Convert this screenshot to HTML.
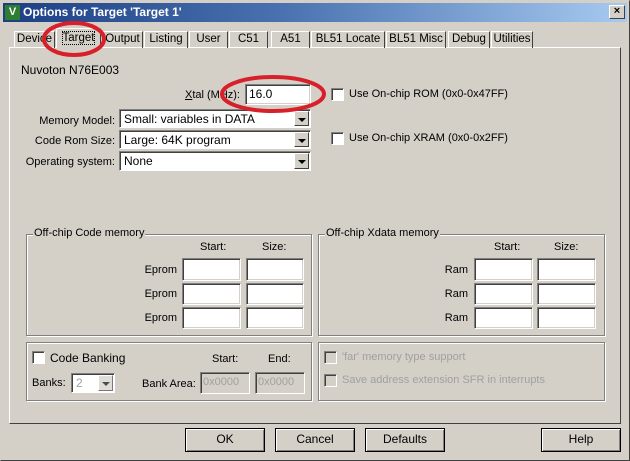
<!DOCTYPE html>
<html><head><style>
*{box-sizing:border-box;margin:0;padding:0}
body{width:630px;height:461px;background:#d4d0c8;font-family:"Liberation Sans",sans-serif;font-size:11px;color:#000;position:relative;overflow:hidden}
.a{position:absolute;white-space:nowrap}
.r{position:absolute;white-space:nowrap;text-align:right}
.win{position:absolute;left:0;top:0;width:630px;height:461px;border:1px solid #404040;border-top-color:#d4d0c8;border-left-color:#d4d0c8}
.tb{position:absolute;left:3px;top:3px;width:624px;height:19px;background:linear-gradient(90deg,#1c3f84,#4a72b0 45%,#a6caf0)}
.in{position:absolute;background:#fff;border:1px solid;border-color:#808080 #fff #fff #808080;box-shadow:inset 1px 1px 0 #404040,inset -1px -1px 0 #d4d0c8}
.dis{background:#d4d0c8;color:#a0a0a0}
.sel{position:absolute;background:#fff;border:1px solid;border-color:#808080 #fff #fff #808080;box-shadow:inset 1px 1px 0 #404040;padding:2px 0 0 4px;font-size:12px}
.dd{position:absolute;right:1px;top:1px;bottom:1px;width:15px;background:#d4d0c8;border:1px solid;border-color:#fff #404040 #404040 #fff}
.dd:after{content:"";position:absolute;left:3px;top:6px;border:4px solid transparent;border-top:4px solid #000;border-bottom:0}
.cb{position:absolute;width:13px;height:13px;background:#fff;border:1px solid;border-color:#808080 #fff #fff #808080;box-shadow:inset 1px 1px 0 #404040}
.grp{position:absolute;border:1px solid #808080;box-shadow:1px 1px 0 #fff,inset 1px 1px 0 #fff}
.gt{position:absolute;top:-8px;left:6px;background:#d4d0c8;padding:0 1px}
.btn{position:absolute;height:24px;border:1px solid #000;background:#d4d0c8;box-shadow:inset 1px 1px 0 #fff,inset -1px -1px 0 #808080;text-align:center;line-height:21px;font-size:12px}
.tab{position:absolute;top:31px;height:17px;border:1px solid;border-color:#fff #404040 transparent #fff;border-bottom:0;text-align:center;line-height:14px;font-size:11.5px}
</style></head><body>
<div class="win"></div>
<div class="tb"></div>
<div class="a" style="left:5px;top:5px;width:15px;height:15px;background:#2e7d32;color:#fff;font-weight:bold;font-size:11px;text-align:center;line-height:15px">V</div>
<div class="a" style="left:23px;top:5px;color:#fff;font-weight:bold;font-size:12px">Options for Target 'Target 1'</div>
<div class="a" style="left:609px;top:5px;width:16px;height:14px;background:#d4d0c8;border:1px solid;border-color:#fff #404040 #404040 #fff;text-align:center;line-height:11px;font-weight:bold;font-size:11px">×</div>

<div class="a" style="left:9px;top:47px;width:612px;height:377px;border:1px solid;border-color:#fff #404040 #404040 #fff"></div>
<div class="tab" style="left:14px;width:41px">Device</div>
<div class="tab" style="left:56px;width:45px;top:28px;height:20px;background:#d4d0c8;z-index:2;padding-top:2px"><span style="outline:1px dotted #000">Target</span></div>
<div class="tab" style="left:102px;width:41px">Output</div>
<div class="tab" style="left:144px;width:44px">Listing</div>
<div class="tab" style="left:189px;width:39px">User</div>
<div class="tab" style="left:229px;width:39px">C51</div>
<div class="tab" style="left:271px;width:39px">A51</div>
<div class="tab" style="left:311px;width:74px">BL51 Locate</div>
<div class="tab" style="left:386px;width:60px">BL51 Misc</div>
<div class="tab" style="left:448px;width:42px">Debug</div>
<div class="tab" style="left:491px;width:42px">Utilities</div>

<div class="a" style="left:21px;top:63px;font-size:12px">Nuvoton N76E003</div>
<div class="r" style="right:390px;top:89px"><u>X</u>tal (MHz):</div>
<div class="in" style="left:245px;top:84px;width:66px;height:21px;padding:2px 3px;font-size:12px">16.0</div>
<div class="cb" style="left:331px;top:88px"></div>
<div class="a" style="left:349px;top:88px">Use On-chip ROM (0x0-0x47FF)</div>
<div class="cb" style="left:331px;top:132px"></div>
<div class="a" style="left:349px;top:132px">Use On-chip XRAM (0x0-0x2FF)</div>

<div class="r" style="right:515px;top:115px">Memory Model:</div>
<div class="sel" style="left:119px;top:109px;width:192px;height:19px">Small: variables in DATA<div class="dd"></div></div>
<div class="r" style="right:515px;top:135px">Code Rom Size:</div>
<div class="sel" style="left:119px;top:130px;width:192px;height:19px">Large: 64K program<div class="dd"></div></div>
<div class="r" style="right:515px;top:156px">Operating system:</div>
<div class="sel" style="left:119px;top:151px;width:192px;height:20px">None<div class="dd"></div></div>

<div class="grp" style="left:26px;top:234px;width:286px;height:102px"><div class="gt">Off-chip Code memory</div></div>
<div class="a" style="left:200px;top:241px">Start:</div>
<div class="a" style="left:262px;top:241px">Size:</div>
<div class="r" style="right:453px;top:264px">Eprom</div>
<div class="r" style="right:453px;top:288px">Eprom</div>
<div class="r" style="right:453px;top:312px">Eprom</div>
<div class="in" style="left:182px;top:258px;width:59px;height:23px"></div>
<div class="in" style="left:246px;top:258px;width:58px;height:23px"></div>
<div class="in" style="left:182px;top:283px;width:59px;height:22px"></div>
<div class="in" style="left:246px;top:283px;width:58px;height:22px"></div>
<div class="in" style="left:182px;top:307px;width:59px;height:22px"></div>
<div class="in" style="left:246px;top:307px;width:58px;height:22px"></div>

<div class="grp" style="left:318px;top:234px;width:287px;height:102px"><div class="gt">Off-chip Xdata memory</div></div>
<div class="a" style="left:494px;top:241px">Start:</div>
<div class="a" style="left:554px;top:241px">Size:</div>
<div class="r" style="right:162px;top:264px">Ram</div>
<div class="r" style="right:162px;top:288px">Ram</div>
<div class="r" style="right:162px;top:312px">Ram</div>
<div class="in" style="left:474px;top:258px;width:59px;height:23px"></div>
<div class="in" style="left:537px;top:258px;width:59px;height:23px"></div>
<div class="in" style="left:474px;top:283px;width:59px;height:22px"></div>
<div class="in" style="left:537px;top:283px;width:59px;height:22px"></div>
<div class="in" style="left:474px;top:307px;width:59px;height:22px"></div>
<div class="in" style="left:537px;top:307px;width:59px;height:22px"></div>

<div class="grp" style="left:26px;top:342px;width:286px;height:59px"></div>
<div class="cb" style="left:32px;top:351px"></div>
<div class="a" style="left:50px;top:351px;font-size:12px">Code Banking</div>
<div class="a" style="left:212px;top:353px">Start:</div>
<div class="a" style="left:268px;top:353px">End:</div>
<div class="a" style="left:32px;top:377px">Banks:</div>
<div class="sel dis" style="left:71px;top:373px;width:44px;height:20px;padding-top:2px">2<div class="dd" style="opacity:.7"></div></div>
<div class="a" style="left:142px;top:378px">Bank Area:</div>
<div class="in dis" style="left:200px;top:372px;width:50px;height:22px;padding:3px 2px">0x0000</div>
<div class="in dis" style="left:255px;top:372px;width:50px;height:22px;padding:3px 2px">0x0000</div>

<div class="grp" style="left:318px;top:342px;width:287px;height:59px"></div>
<div class="cb" style="left:324px;top:351px;background:#d4d0c8"></div>
<div class="a" style="left:342px;top:351px;color:#a0a0a0">'far' memory type support</div>
<div class="cb" style="left:324px;top:374px;background:#d4d0c8"></div>
<div class="a" style="left:342px;top:374px;color:#a0a0a0">Save address extension SFR in interrupts</div>

<div class="btn" style="left:185px;top:428px;width:80px">OK</div>
<div class="btn" style="left:275px;top:428px;width:80px">Cancel</div>
<div class="btn" style="left:365px;top:428px;width:80px">Defaults</div>
<div class="btn" style="left:541px;top:428px;width:80px">Help</div>

<svg class="a" style="left:0;top:0;z-index:5" width="630" height="461">
<ellipse cx="74" cy="39" rx="30" ry="16" fill="none" stroke="#d8202a" stroke-width="4"/>
<ellipse cx="273" cy="94" rx="51" ry="17" fill="none" stroke="#d8202a" stroke-width="4"/>
</svg>
</body></html>
